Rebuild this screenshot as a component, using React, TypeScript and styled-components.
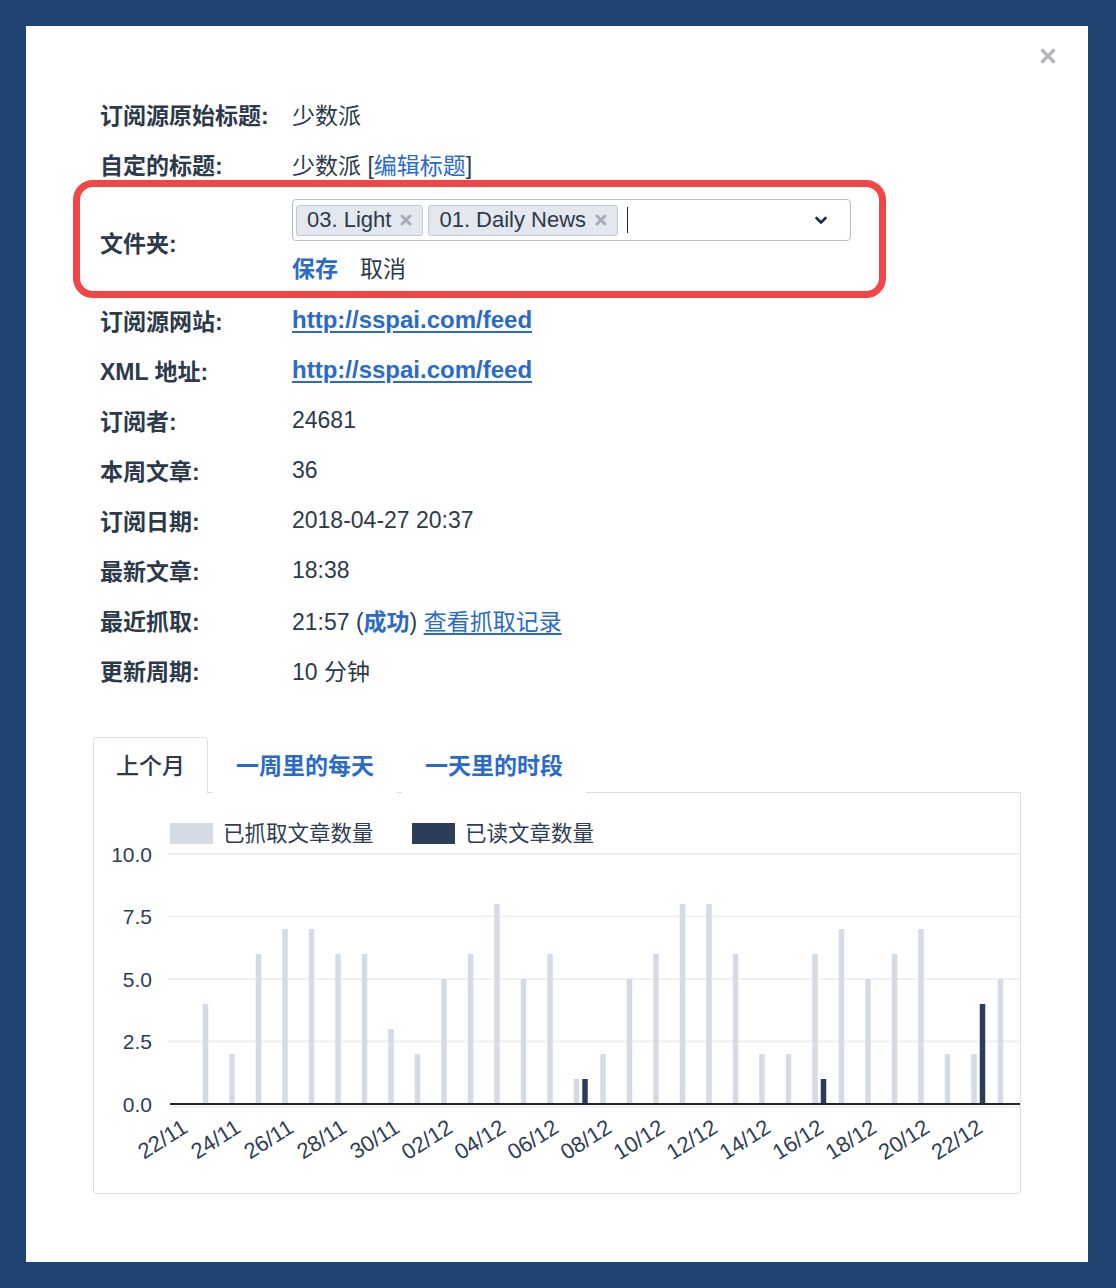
import styled, { createGlobalStyle } from "styled-components";

const GlobalStyle = createGlobalStyle`
  html, body {
    margin: 0;
    padding: 0;
    background: #1f4471;
  }
  body {
    font-family: "Liberation Sans", "Noto Sans CJK SC", sans-serif;
    color: #2c3a4b;
  }
  * { box-sizing: border-box; }
`;

const fetched = [0, 4, 2, 6, 7, 7, 6, 6, 3, 2, 5, 6, 8, 5, 6, 1, 2, 5, 6, 8, 8, 6, 2, 2, 6, 7, 5, 6, 7, 2, 2, 5];
const read: Record<number, number> = { 15: 1, 24: 1, 30: 4 };

const dayLabel = (i: number) => {
  const d = 22 + i;
  if (d <= 30) return `${d}/11`;
  return `${String(d - 30).padStart(2, "0")}/12`;
};

function Chart() {
  const base = 311;
  const unit = 25;
  const step = 26.5;
  const left = 76;
  return (
    <ChartSvg width="926" height="400" viewBox="0 0 926 400">
      <rect x="76" y="30" width="43" height="21" fill="#d5dbe5" />
      <LegendText x="129" y="41">已抓取文章数量</LegendText>
      <rect x="318" y="30" width="43" height="21" fill="#2b3d59" />
      <LegendText x="371" y="41">已读文章数量</LegendText>
      {[10, 7.5, 5, 2.5, 0].map((v) => {
        const y = base - v * unit;
        return (
          <g key={v}>
            {v > 0 && <line x1="74" x2="926" y1={y} y2={y} stroke="#eef0f3" strokeWidth="2" />}
            <AxisText x="58" y={y} textAnchor="end">
              {v.toFixed(1)}
            </AxisText>
          </g>
        );
      })}
      {fetched.map((v, i) => {
        const c = left + step * (i + 0.5);
        const r = read[i] || 0;
        return (
          <g key={i}>
            {v > 0 && <rect x={c - 7} y={base - v * unit} width="5.5" height={v * unit} fill="#d5dbe5" />}
            {r > 0 && <rect x={c + 1.5} y={base - r * unit} width="5.5" height={r * unit} fill="#2b3d59" />}
            {i % 2 === 0 && (
              <DateText
                x={c + 2}
                y={332}
                textAnchor="end"
                transform={`rotate(-32 ${c + 2} 332)`}
              >
                {dayLabel(i)}
              </DateText>
            )}
          </g>
        );
      })}
      <line x1="76" x2="926" y1={base + 3} y2={base + 3} stroke="#f1f2f4" strokeWidth="1.5" />
      <line x1="76" x2="926" y1={base} y2={base} stroke="#23272e" strokeWidth="2" />
    </ChartSvg>
  );
}

function App() {
  return (
    <>
      <GlobalStyle />
      <Page>
        <Modal>
          <CloseButton aria-label="close">
            <svg width="16" height="16" viewBox="0 0 16 16">
              <path d="M2.5 2.5 L13.5 13.5 M13.5 2.5 L2.5 13.5" stroke="#b3b7bf" strokeWidth="3.6" strokeLinecap="round" />
            </svg>
          </CloseButton>

          <Row>
            <Label>订阅源原始标题:</Label>
            <Value>少数派</Value>
          </Row>
          <Row>
            <Label>自定的标题:</Label>
            <Value>
              少数派 [<PlainLink>编辑标题</PlainLink>]
            </Value>
          </Row>

          <FolderBox>
            <FolderLabel>文件夹:</FolderLabel>
            <div>
              <Select>
                <Tag>
                  03. Light
                  <TagX />
                </Tag>
                <Tag>
                  01. Daily News
                  <TagX />
                </Tag>
                <Caret />
                <Chevron>
                  <svg width="16" height="16" viewBox="0 0 16 16">
                    <path d="M3.5 6 L8 10.5 L12.5 6" fill="none" stroke="#1f2d45" strokeWidth="2.6" strokeLinecap="round" strokeLinejoin="round" />
                  </svg>
                </Chevron>
              </Select>
              <Actions>
                <SaveButton>保存</SaveButton>
                <CancelButton>取消</CancelButton>
              </Actions>
            </div>
          </FolderBox>

          <Row>
            <Label>订阅源网站:</Label>
            <Value>
              <BoldLink>http://sspai.com/feed</BoldLink>
            </Value>
          </Row>
          <Row>
            <Label>XML 地址:</Label>
            <Value>
              <BoldLink>http://sspai.com/feed</BoldLink>
            </Value>
          </Row>
          <Row>
            <Label>订阅者:</Label>
            <Value>24681</Value>
          </Row>
          <Row>
            <Label>本周文章:</Label>
            <Value>36</Value>
          </Row>
          <Row>
            <Label>订阅日期:</Label>
            <Value>2018-04-27 20:37</Value>
          </Row>
          <Row>
            <Label>最新文章:</Label>
            <Value>18:38</Value>
          </Row>
          <Row>
            <Label>最近抓取:</Label>
            <Value>
              21:57 (<Success>成功</Success>) <UnderLink>查看抓取记录</UnderLink>
            </Value>
          </Row>
          <Row>
            <Label>更新周期:</Label>
            <Value>10 分钟</Value>
          </Row>

          <Stats>
            <TabBar>
              <Tab active>上个月</Tab>
              <Tab>一周里的每天</Tab>
              <Tab>一天里的时段</Tab>
            </TabBar>
            <Panel>
              <Chart />
            </Panel>
          </Stats>
        </Modal>
      </Page>
    </>
  );
}

function TagX() {
  return (
    <TagClose viewBox="0 0 14 14" width="14" height="14">
      <path d="M3 3 L11 11 M11 3 L3 11" stroke="#a4acb8" strokeWidth="3" strokeLinecap="round" />
    </TagClose>
  );
}

export default App;

const Page = styled.div`
  padding: 26px 28px 26px 26px;
  min-height: 1288px;
`;

const Modal = styled.div`
  position: relative;
  background: #ffffff;
  height: 1236px;
  padding: 63px 0 0 74px;
`;

const CloseButton = styled.button`
  position: absolute;
  top: 22px;
  right: 32px;
  border: 0;
  background: none;
  padding: 0;
  display: flex;
  cursor: pointer;
`;

const Row = styled.div`
  display: grid;
  grid-template-columns: 192px 1fr;
  align-items: center;
  height: 50px;
  font-size: 23px;
`;

const Label = styled.div`
  font-weight: 700;
  color: #2c3a4b;
`;

const Value = styled.div`
  color: #2c3a4b;
`;

const PlainLink = styled.a`
  color: #2a6bc9;
  text-decoration: none;
`;

const BoldLink = styled.a`
  color: #2a6bc9;
  font-weight: 700;
  font-size: 24px;
  text-decoration: underline;
  text-underline-offset: 3px;
`;

const UnderLink = styled.a`
  color: #2a6bc9;
  text-decoration: underline;
  text-underline-offset: 3px;
`;

const Success = styled.span`
  color: #2a6bc9;
  font-weight: 700;
`;

const FolderBox = styled.div`
  display: grid;
  grid-template-columns: 192px 559px;
  width: 813px;
  margin: -9px 0 -3px -27px;
  padding: 12px 0 8px 20px;
  border: 7px solid #f24545;
  border-radius: 20px;
  font-size: 23px;
`;

const FolderLabel = styled(Label)`
  align-self: center;
  padding-top: 2px;
`;

const Select = styled.div`
  display: flex;
  align-items: center;
  gap: 5px;
  height: 42px;
  padding: 0 3px;
  border: 1px solid #b9bec6;
  border-radius: 4px;
`;

const Tag = styled.span`
  display: inline-flex;
  align-items: center;
  gap: 8px;
  height: 31px;
  padding: 0 9px 0 10px;
  background: #e3e7ee;
  border: 1px solid #c3c9d2;
  border-radius: 3px;
  font-size: 22px;
  color: #2c3a4b;
`;

const TagClose = styled.svg`
  display: block;
`;

const Caret = styled.span`
  width: 1px;
  height: 26px;
  margin-left: 4px;
  background: #1d2430;
`;

const Chevron = styled.span`
  display: flex;
  margin-left: auto;
  margin-right: 18px;
`;

const Actions = styled.div`
  display: flex;
  gap: 22px;
  margin-top: 14px;
  line-height: 28px;
`;

const SaveButton = styled.span`
  color: #2a6bc9;
  font-weight: 700;
`;

const CancelButton = styled.span`
  color: #2c3a4b;
`;

const Stats = styled.div`
  margin: 42px 0 0 -7px;
  width: 928px;
`;

const TabBar = styled.div`
  display: flex;
  gap: 5px;
  border-bottom: 1px solid #dcdfe4;
  height: 56px;
`;

const Tab = styled.div<{ active?: boolean }>`
  display: flex;
  align-items: center;
  padding: 0 22px 4px;
  height: 57px;
  font-size: 23px;
  font-weight: ${(p) => (p.active ? 500 : 700)};
  color: ${(p) => (p.active ? "#2c3a4b" : "#2a6bc9")};
  background: #ffffff;
  border: 1px solid ${(p) => (p.active ? "#dcdfe4" : "transparent")};
  border-bottom: 1px solid ${(p) => (p.active ? "#ffffff" : "transparent")};
  border-radius: 4px 4px 0 0;
`;

const Panel = styled.div`
  height: 401px;
  border: 1px solid #dcdfe4;
  border-top: 0;
  border-radius: 0 0 4px 4px;
`;

const ChartSvg = styled.svg`
  display: block;
  font-family: "Liberation Sans", "Noto Sans CJK SC", sans-serif;
`;

const LegendText = styled.text`
  font-size: 21.5px;
  fill: #2f3d52;
  dominant-baseline: central;
`;

const AxisText = styled.text`
  font-size: 21px;
  fill: #2f3d52;
  dominant-baseline: central;
`;

const DateText = styled(AxisText)`
  font-size: 22px;
`;
